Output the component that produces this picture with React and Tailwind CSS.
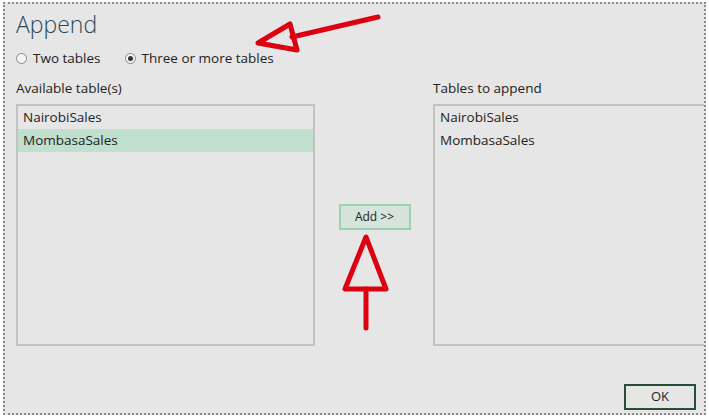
const rows = ["NairobiSales", "MombasaSales"];

const ListBox = ({ selected, className }) => (
    <div className={`h-[242px] border-2 border-[#c2c2c2] bg-[#e6e6e6] ${className}`}>
        {rows.map((r) => (
            <div
                key={r}
                className={`h-[23px] flex items-center pl-[5px] text-[13.5px] text-[#222] ${r === selected ? "bg-[#c0dfcd]" : ""}`}
            >
                {r}
            </div>
        ))}
    </div>
);

const Radio = ({ checked, label }) => (
    <label className="flex items-center gap-[6px]">
        <span className="size-[11px] rounded-full border border-[#8a8a8a] bg-[#f4f4f4] flex items-center justify-center">
            {checked && <span className="size-[5px] rounded-full bg-[#333]" />}
        </span>
        <span>{label}</span>
    </label>
);

export default function App() {
    return (
        <div className="w-[709px] h-[419px] bg-white pt-[2px] pl-[3px] font-['Open_Sans',sans-serif]">
            <div className="relative w-[703px] h-[413px] border-2 border-dotted border-[#8a8a8a] bg-[#e6e6e6] overflow-hidden">
                <div className="pl-[11px] pt-[5px] text-[#222]">
                    <h1 className="text-[23px] font-light leading-[30px] text-[#2a4a58]">Append</h1>

                    <div className="mt-[10px] flex items-center gap-[24px] text-[13.5px] leading-[18px]">
                        <Radio label="Two tables" />
                        <Radio checked label="Three or more tables" />
                    </div>

                    <div className="mt-[12px] flex">
                        <div className="w-[299px] shrink-0">
                            <div className="text-[13.5px] leading-[18px] mb-[7px]">Available table(s)</div>
                            <ListBox selected="MombasaSales" />
                        </div>
                        <div className="w-[119px] shrink-0 flex justify-center pt-[125px]">
                            <button className="w-[72px] h-[26px] border-2 border-[#9bd3b1] bg-[#d6e4dc] text-[12px] text-[#222]">
                                Add &gt;&gt;
                            </button>
                        </div>
                        <div className="w-[320px] shrink-0 -ml-[1px]">
                            <div className="text-[13.5px] leading-[18px] mb-[7px]">Tables to append</div>
                            <ListBox />
                        </div>
                    </div>

                    <div className="mt-[38px] flex justify-end pr-[8px]">
                        <button className="w-[72px] h-[26px] border-2 border-[#284e38] bg-[#e6e6e6] text-[13px] text-[#222]">
                            OK
                        </button>
                    </div>
                </div>

                <svg className="absolute left-[-5px] top-[-4px] pointer-events-none" width="709" height="419">
                    <g stroke="#dc0010" strokeWidth="5" fill="none" strokeLinecap="round" strokeLinejoin="round">
                        <path d="M378 17 L292 37" />
                        <path d="M258 43 L290 24 L297 50 Z" />
                        <path d="M366 237 L345 289 L386 289 Z" />
                        <path d="M366 289 L366 328" />
                    </g>
                </svg>
            </div>
        </div>
    );
}
